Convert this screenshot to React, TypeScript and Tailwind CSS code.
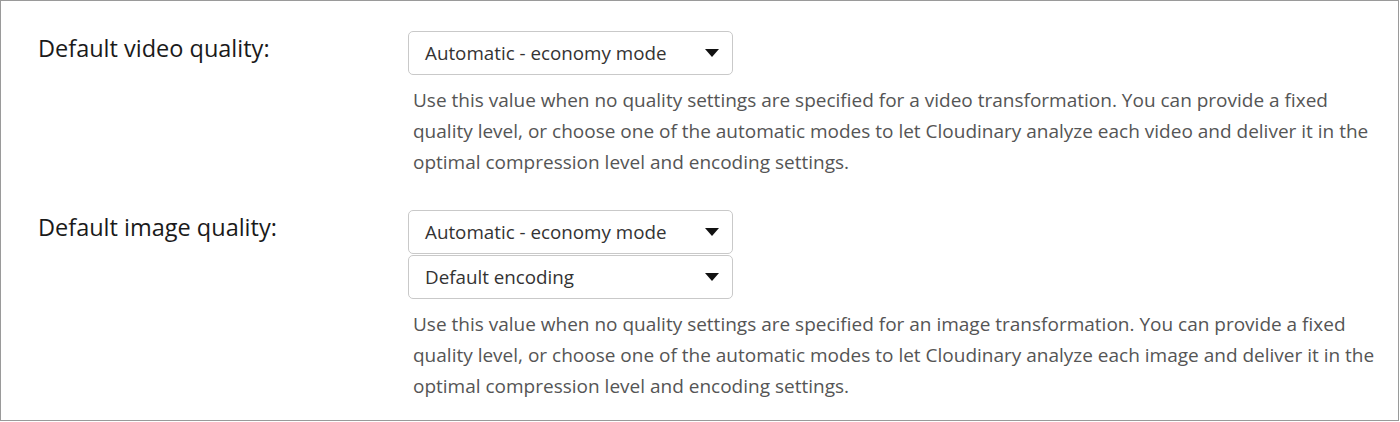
import React from "react";

function Caret() {
  return (
    <svg width="14" height="8" viewBox="0 0 14 8" className="shrink-0">
      <path d="M0 0 L14 0 L7 8 Z" fill="#111" />
    </svg>
  );
}

function Select({ value }: { value: string }) {
  return (
    <div className="flex h-[44px] w-[325px] items-center justify-between rounded-[5px] border border-[#c9c9c9] bg-white pl-[16px] pr-[13px] text-[18.8px] text-[#333]">
      <span>{value}</span>
      <Caret />
    </div>
  );
}

function Desc({ kind }: { kind: string }) {
  return (
    <p className="mt-[10px] w-[967px] pl-[5px] text-[19px] leading-[31px] text-[#555]">
      Use this value when no quality settings are specified for {kind === "video" ? "a video" : "an image"} transformation. You can provide a fixed quality level, or choose one of the automatic modes to let Cloudinary analyze each {kind} and deliver it in the optimal compression level and encoding settings.
    </p>
  );
}

export default function App() {
  return (
    <div
      className="h-[421px] w-[1399px] border border-[#9a9a9a] bg-white pl-[37px] pt-[30px]"
      style={{ fontFamily: '"Open Sans", "Noto Sans", sans-serif' }}
    >
      <div className="flex">
        <div className="w-[370px] pt-[1px] text-[23.5px] leading-[32px] text-[#1a1a1a]">Default video quality:</div>
        <div className="flex flex-col">
          <Select value="Automatic - economy mode" />
          <Desc kind="video" />
        </div>
      </div>
      <div className="mt-[32px] flex">
        <div className="w-[370px] pt-[1px] text-[23.5px] leading-[32px] text-[#1a1a1a]">Default image quality:</div>
        <div className="flex flex-col">
          <div className="flex flex-col gap-[1px]">
            <Select value="Automatic - economy mode" />
            <Select value="Default encoding" />
          </div>
          <Desc kind="image" />
        </div>
      </div>
    </div>
  );
}
